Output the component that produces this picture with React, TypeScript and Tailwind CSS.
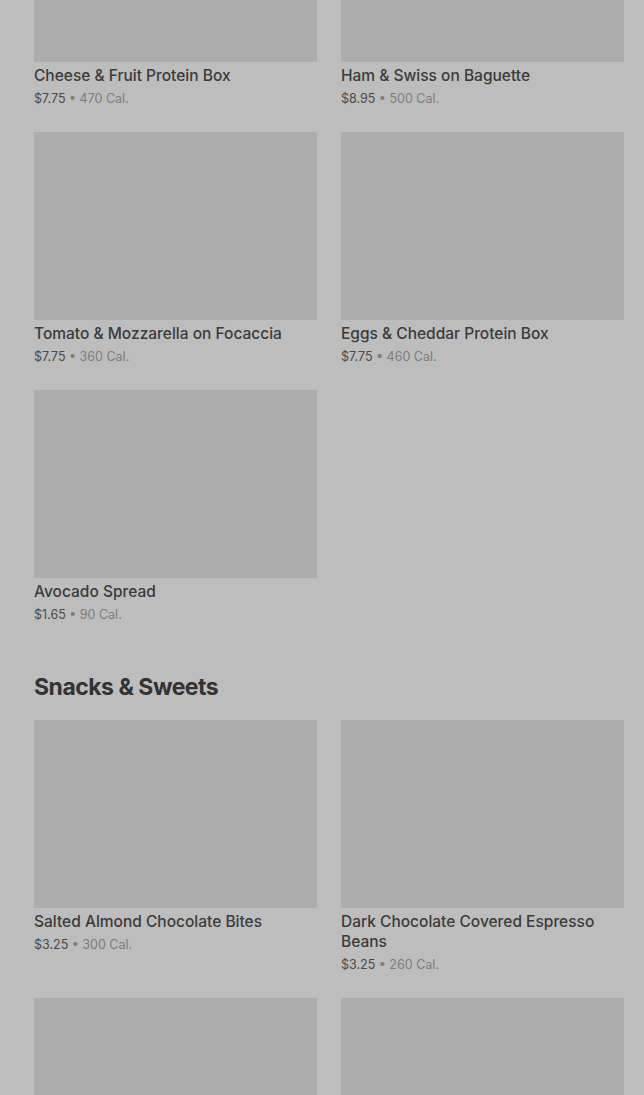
type Item = { name: string; price: string; cal: string };

const rowsA: Item[] = [
  { name: 'Cheese & Fruit Protein Box', price: '$7.75', cal: '470 Cal.' },
  { name: 'Ham & Swiss on Baguette', price: '$8.95', cal: '500 Cal.' },
  { name: 'Tomato & Mozzarella on Focaccia', price: '$7.75', cal: '360 Cal.' },
  { name: 'Eggs & Cheddar Protein Box', price: '$7.75', cal: '460 Cal.' },
  { name: 'Avocado Spread', price: '$1.65', cal: '90 Cal.' },
];

const snacks: Item[] = [
  { name: 'Salted Almond Chocolate Bites', price: '$3.25', cal: '300 Cal.' },
  { name: 'Dark Chocolate Covered Espresso Beans', price: '$3.25', cal: '260 Cal.' },
];

function Card({ item }: { item: Item }) {
  return (
    <div className="flex flex-col">
      <div className="h-[188px] w-full bg-[#adadad]" />
      <div className="pt-[4px] text-[15.5px] leading-5 font-medium text-[#3b3b3b]">{item.name}</div>
      <div className="mt-[3px] text-[12.5px] leading-5">
        <span className="text-[#4a4a4a]">{item.price}</span>
        <span className="text-[#7c7c7c]"> • {item.cal}</span>
      </div>
    </div>
  );
}

export default function App() {
  return (
    <div className="h-[1095px] w-full overflow-hidden bg-[#bdbdbd]" style={{ fontFamily: 'Inter, "Noto Sans", sans-serif' }}>
      <div className="-mt-[126px] pl-[34px] pr-[20px]">
        <div className="grid grid-cols-2 gap-x-6 gap-y-[23px]">
          {rowsA.map((it) => (
            <Card key={it.name} item={it} />
          ))}
        </div>

        <h2 className="pt-[46px] pb-[17px] text-[23px] leading-8 font-bold tracking-[-0.5px] text-[#333333]">
          Snacks &amp; Sweets
        </h2>

        <div className="grid grid-cols-2 gap-x-6 gap-y-[23px]">
          {snacks.map((it) => (
            <Card key={it.name} item={it} />
          ))}
          <div className="h-[188px] bg-[#adadad]" />
          <div className="h-[188px] bg-[#adadad]" />
        </div>
      </div>
    </div>
  );
}
